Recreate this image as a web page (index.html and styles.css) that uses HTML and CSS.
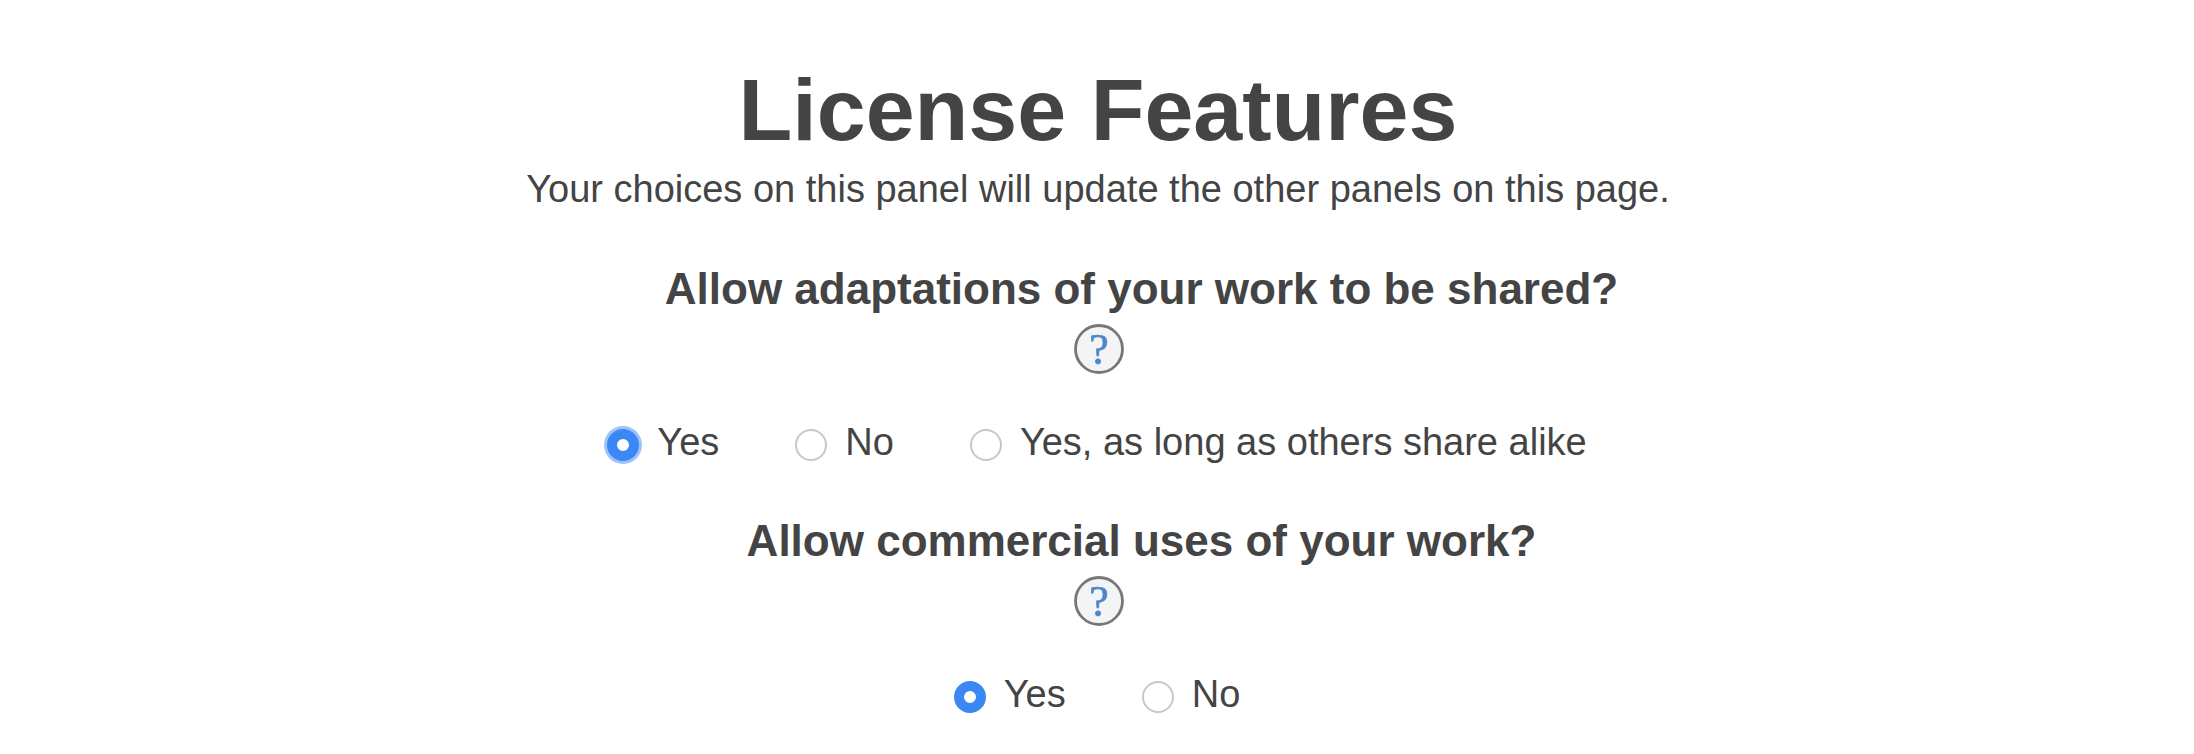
FILE: index.html
```html
<!DOCTYPE html>
<html lang="en">
<head>
<meta charset="utf-8">
<title>License Features</title>
<link rel="stylesheet" href="styles.css">
</head>
<body>
<main class="panel">
  <h1 class="title">License Features</h1>
  <p class="lead">Your choices on this panel will update the other panels on this page.</p>
  <section class="question question-first">
    <h2 class="question-title">Allow adaptations of your work to be shared?</h2>
    <span class="help"><svg viewBox="0 0 50 50" width="50" height="50" aria-hidden="true"><circle cx="25" cy="25" r="23.5" fill="#f3f4f6" stroke="#777" stroke-width="2.8"/><text x="25" y="40" text-anchor="middle" class="help-mark">?</text></svg></span>
    <div class="options">
      <label class="option"><span class="radio radio-on radio-focus"></span>Yes</label>
      <label class="option"><span class="radio"></span>No</label>
      <label class="option"><span class="radio"></span>Yes, as long as others share alike</label>
    </div>
  </section>
  <section class="question">
    <h2 class="question-title">Allow commercial uses of your work?</h2>
    <span class="help"><svg viewBox="0 0 50 50" width="50" height="50" aria-hidden="true"><circle cx="25" cy="25" r="23.5" fill="#f3f4f6" stroke="#777" stroke-width="2.8"/><text x="25" y="40" text-anchor="middle" class="help-mark">?</text></svg></span>
    <div class="options">
      <label class="option"><span class="radio radio-on"></span>Yes</label>
      <label class="option"><span class="radio"></span>No</label>
    </div>
  </section>
</main>
</body>
</html>
```
FILE: styles.css
```css
* { box-sizing: border-box; }
html, body { margin: 0; background: #fff; }
body { font-family: "Liberation Sans", Arial, sans-serif; color: #444; height: 754px; overflow: hidden; }
.panel { display: flex; flex-direction: column; align-items: center; text-align: center; padding: 55px 0 0 2px; }
.title { margin: 0; font-size: 88px; line-height: 109px; font-weight: 700; }
.lead { margin: 0; font-size: 38px; line-height: 50px; }
.question { display: flex; flex-direction: column; align-items: center; }
.question-first { margin-top: 48px; }
.question + .question { margin-top: 44px; }
.question-title { margin: 0; padding-left: 87px; font-size: 44px; line-height: 54px; font-weight: 700; }
.help { display: block; width: 50px; height: 50px; margin: 8px 0 0 2px; }
.help svg { display: block; filter: blur(0.5px); }
.help-mark { font-family: "Liberation Serif", serif; font-size: 44px; fill: #4f86c8; stroke: #4f86c8; stroke-width: 0.7px; }
.options { display: flex; justify-content: center; gap: 76px; margin: 46px 0 0 -2px; height: 50px; align-items: flex-start; }
.option { display: flex; align-items: flex-start; font-size: 38px; line-height: 44px; }
.radio { display: block; width: 32px; height: 32px; border-radius: 50%; border: 2px solid #c8c8c8; background: #fff; margin: 9px 18px 0 0; }
.radio-on { border: 10px solid #3b88f5; background: #fff; }
.radio-focus { box-shadow: 0 0 0 3px #9dc3fa; }
```
